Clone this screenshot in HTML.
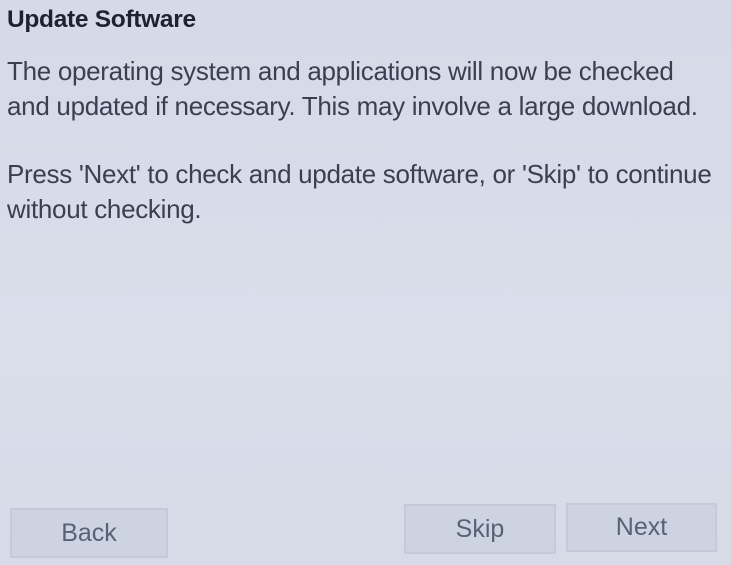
<!DOCTYPE html>
<html><head><style>
body{margin:0;width:731px;height:565px;overflow:hidden;background:linear-gradient(180deg,#d5dae8 0%,#d9deeb 60%,#d6dbe8 100%);font-family:"Liberation Sans",sans-serif;position:relative}
.t{position:absolute;left:7px;top:6px;font-size:24.5px;font-weight:bold;color:#1f2230;letter-spacing:-0.3px}
.p{position:absolute;left:7px;font-size:26px;line-height:35px;color:#3a3f52;letter-spacing:-0.3px}
.b{position:absolute;background:#cdd3e1;border:2px solid #c4cad9;color:#5a6176;font-size:25px;display:flex;align-items:center;justify-content:center;box-sizing:border-box}
</style></head><body>
<div class="t">Update Software</div>
<div class="p" style="top:54px">The operating system and applications will now be checked<br>and updated if necessary. This may involve a large download.</div>
<div class="p" style="top:157px">Press 'Next' to check and update software, or 'Skip' to continue<br>without checking.</div>
<div class="b" style="left:10px;top:508px;width:158px;height:50px">Back</div>
<div class="b" style="left:404px;top:504px;width:152px;height:50px">Skip</div>
<div class="b" style="left:566px;top:503px;width:151px;height:49px">Next</div>
</body></html>
